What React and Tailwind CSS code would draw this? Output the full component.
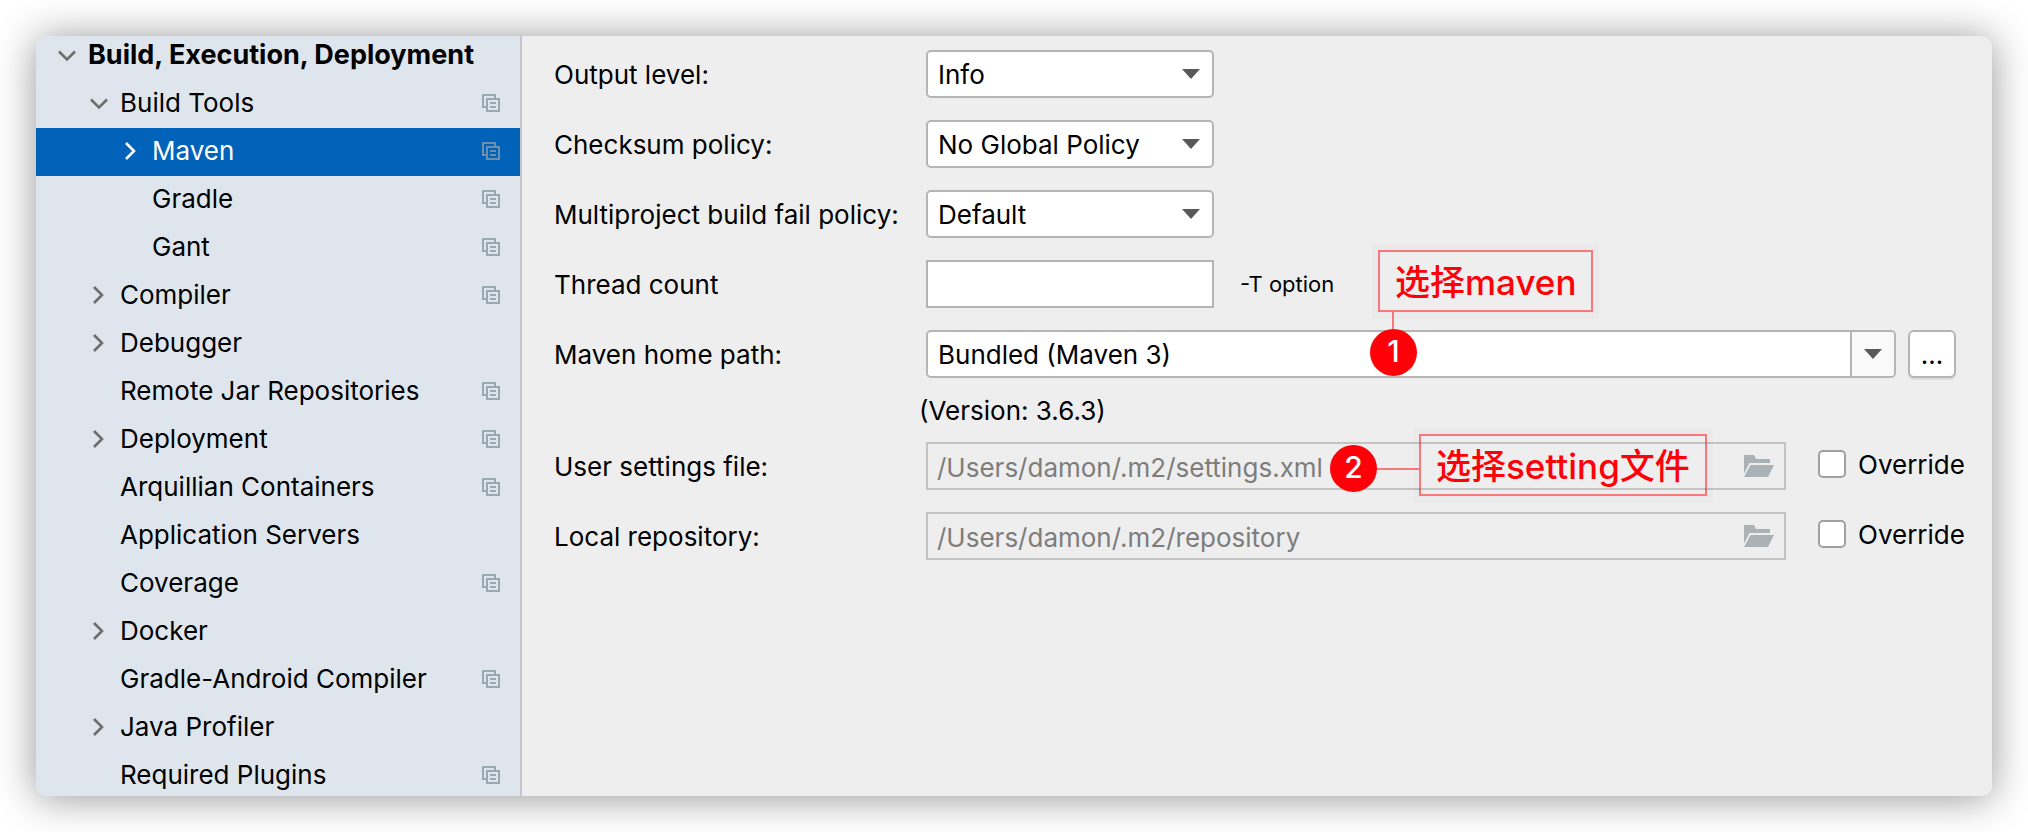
import React from "react";

const tree = [
  { label: "Build, Execution, Deployment", level: 0, arrow: "down", bold: true },
  { label: "Build Tools", level: 1, arrow: "down", copy: true },
  { label: "Maven", level: 2, arrow: "right", copy: true, selected: true },
  { label: "Gradle", level: 2, copy: true },
  { label: "Gant", level: 2, copy: true },
  { label: "Compiler", level: 1, arrow: "right", copy: true },
  { label: "Debugger", level: 1, arrow: "right" },
  { label: "Remote Jar Repositories", level: 1, copy: true },
  { label: "Deployment", level: 1, arrow: "right", copy: true },
  { label: "Arquillian Containers", level: 1, copy: true },
  { label: "Application Servers", level: 1 },
  { label: "Coverage", level: 1, copy: true },
  { label: "Docker", level: 1, arrow: "right" },
  { label: "Gradle-Android Compiler", level: 1, copy: true },
  { label: "Java Profiler", level: 1, arrow: "right" },
  { label: "Required Plugins", level: 1, copy: true },
];

const indents = ["pl-5", "pl-13", "pl-21"];

function Chevron({ direction }) {
  return (
    <svg className="size-[22px]" viewBox="0 0 22 22" fill="none" stroke="currentColor" strokeWidth="2.6" aria-hidden="true">
      {direction === "down" && <path d="M3 7.500l8 8 8-8" />}
      {direction === "right" && <path d="M6 3l8 8-8 8" />}
    </svg>
  );
}

function CopyIcon() {
  return (
    <svg className="size-[18px] shrink-0" viewBox="0 0 18 18" fill="none" stroke="currentColor" strokeWidth="2" aria-hidden="true">
      <path d="M13 4V1H1v12h3" />
      <path d="M5 5h12v12H5z" />
      <path d="M8 9h6M8 13h6" />
    </svg>
  );
}

function Triangle() {
  return (
    <svg className="h-[10px] w-[18px]" viewBox="0 0 18 10" fill="#595959" aria-hidden="true">
      <path d="M0 0h18L9 10z" />
    </svg>
  );
}

function FolderIcon() {
  return (
    <svg className="h-[22px] w-[30px]" viewBox="0 0 30 22" fill="#aab2b6" aria-hidden="true">
      <path d="M0 0h10l2 4h14v4H5.500L0 18.500z" />
      <path d="M6.500 10H30l-6 12H0z" />
    </svg>
  );
}

function TreeItem({ item }) {
  return (
    <li>
      <button
        type="button"
        className={`flex h-12 w-full items-center gap-[10px] pr-5 pb-[2px] text-left ${indents[item.level]} ${
          item.selected ? "bg-[#0062b8] text-white" : ""
        }`}
      >
        <span className={item.selected ? "text-white" : "text-[#6e6e6e]"}>
          <Chevron direction={item.arrow} />
        </span>
        <span className={`flex-1 whitespace-nowrap ${item.bold ? "text-[27px] font-bold" : ""}`}>{item.label}</span>
        {item.copy && (
          <span className={item.selected ? "text-[#6f8fae]" : "text-[#9aa8b1]"}>
            <CopyIcon />
          </span>
        )}
      </button>
    </li>
  );
}

function Row({ id, label, children }) {
  return (
    <div className="flex items-center">
      <label htmlFor={id} className="w-[372px] shrink-0 pt-[2px] whitespace-nowrap">
        {label}
      </label>
      {children}
    </div>
  );
}

function Dropdown({ id, value }) {
  return (
    <div className="relative w-72">
      <select id={id} className="h-12 w-full appearance-none rounded-[5px] border-2 border-[#b5b5b5] bg-white pt-[2px] pr-10 pl-[10px]">
        <option>{value}</option>
      </select>
      <span className="pointer-events-none absolute inset-y-0 right-[14px] flex items-center">
        <Triangle />
      </span>
    </div>
  );
}

function PathRow({ id, label, value, children }) {
  return (
    <Row id={id} label={label}>
      <div className="relative flex-1">
        <input id={id} disabled defaultValue={value} className="block h-12 w-full border-2 border-[#c3c3c3] bg-transparent pt-[2px] pr-14 pl-[9px] text-[#7d7d7d]" />
        <span className="pointer-events-none absolute inset-y-0 right-3 flex items-center">
          <FolderIcon />
        </span>
        {children}
      </div>
      <label className="ml-8 flex w-36 items-center gap-3 pb-1">
        <input type="checkbox" className="size-7 shrink-0 appearance-none rounded-[5px] border-2 border-[#a0a0a0] bg-white" />
        <span className="pt-[2px]">Override</span>
      </label>
    </Row>
  );
}

function Marker({ children }) {
  return (
    <span className="flex size-[47px] shrink-0 items-center justify-center rounded-full bg-[#ff0008] pb-1 text-[30px] font-medium text-white">
      {children}
    </span>
  );
}

function Note({ children }) {
  return (
    <span className="flex h-[62px] items-center border-2 border-[#ff0008]/50 px-[15px] pt-[2px] text-[35px] font-medium whitespace-nowrap text-[#ff0008] shadow-[0_0_0_6px_rgba(0,0,0,0.015)]">
      {children}
    </span>
  );
}

export default function App() {
  return (
    <div className="flex min-h-screen bg-white p-9 font-['Inter','Noto_Sans_CJK_SC',sans-serif] text-[26px] leading-8 text-black">
      <div className="flex flex-1 overflow-hidden rounded-[10px] bg-[#eeeeee] shadow-[0_2px_40px_rgba(0,0,0,0.42)]">
        <nav aria-label="Settings" className="w-[486px] shrink-0 overflow-hidden border-r-2 border-[#c6c6c6] bg-[#dfe5ed]">
          <ul className="-my-1">
            {tree.map((item) => (
              <TreeItem key={item.label} item={item} />
            ))}
          </ul>
        </nav>

        <main className="flex-1 pt-[14px] pr-[30px] pl-8">
          <form className="flex flex-col gap-[22px]">
            <Row id="output" label="Output level:">
              <Dropdown id="output" value="Info" />
            </Row>
            <Row id="checksum" label="Checksum policy:">
              <Dropdown id="checksum" value="No Global Policy" />
            </Row>
            <Row id="fail" label="Multiproject build fail policy:">
              <Dropdown id="fail" value="Default" />
            </Row>
            <Row id="threads" label="Thread count">
              <input id="threads" className="h-12 w-72 border-2 border-[#b5b5b5] bg-white px-[9px]" />
              <span className="ml-[26px] text-[22px]">-T option</span>
            </Row>

            <div>
              <Row id="home" label="Maven home path:">
                <div className="relative flex-1">
                  <select id="home" className="block h-12 w-full appearance-none rounded-[5px] border-2 border-[#b5b5b5] bg-white pt-[2px] pr-14 pl-[10px]">
                    <option>Bundled (Maven 3)</option>
                  </select>
                  <span className="pointer-events-none absolute inset-y-[2px] right-[2px] flex w-11 items-center justify-center rounded-r-[3px] border-l-2 border-[#b5b5b5] bg-[#f9f9f9]">
                    <Triangle />
                  </span>
                  <div className="pointer-events-none absolute -top-20 left-[444px] flex flex-col items-start">
                    <span className="ml-2">
                      <Note>选择maven</Note>
                    </span>
                    <span className="ml-[22px] h-[17px] w-[2px] bg-[#ff0008]/50" />
                    <Marker>1</Marker>
                  </div>
                </div>
                <button type="button" aria-label="Browse" className="mr-[6px] ml-3 size-12 shrink-0 rounded-[6px] border-2 border-[#b5b5b5] bg-white pt-[2px] shadow-[0_2px_0_rgba(0,0,0,0.07)]">
                  ...
                </button>
              </Row>
              <p className="flex h-16 items-center pt-[2px] pl-[365px]">(Version: 3.6.3)</p>
              <PathRow id="settings" label="User settings file:" value="/Users/damon/.m2/settings.xml">
                <div className="pointer-events-none absolute -top-2 left-[404px] flex items-start">
                  <div className="flex items-center pt-[11px]">
                    <Marker>2</Marker>
                    <span className="h-[2px] w-[42px] bg-[#ff0008]/50" />
                  </div>
                  <Note>选择setting文件</Note>
                </div>
              </PathRow>
            </div>

            <PathRow id="repository" label="Local repository:" value="/Users/damon/.m2/repository" />
          </form>
        </main>
      </div>
    </div>
  );
}
